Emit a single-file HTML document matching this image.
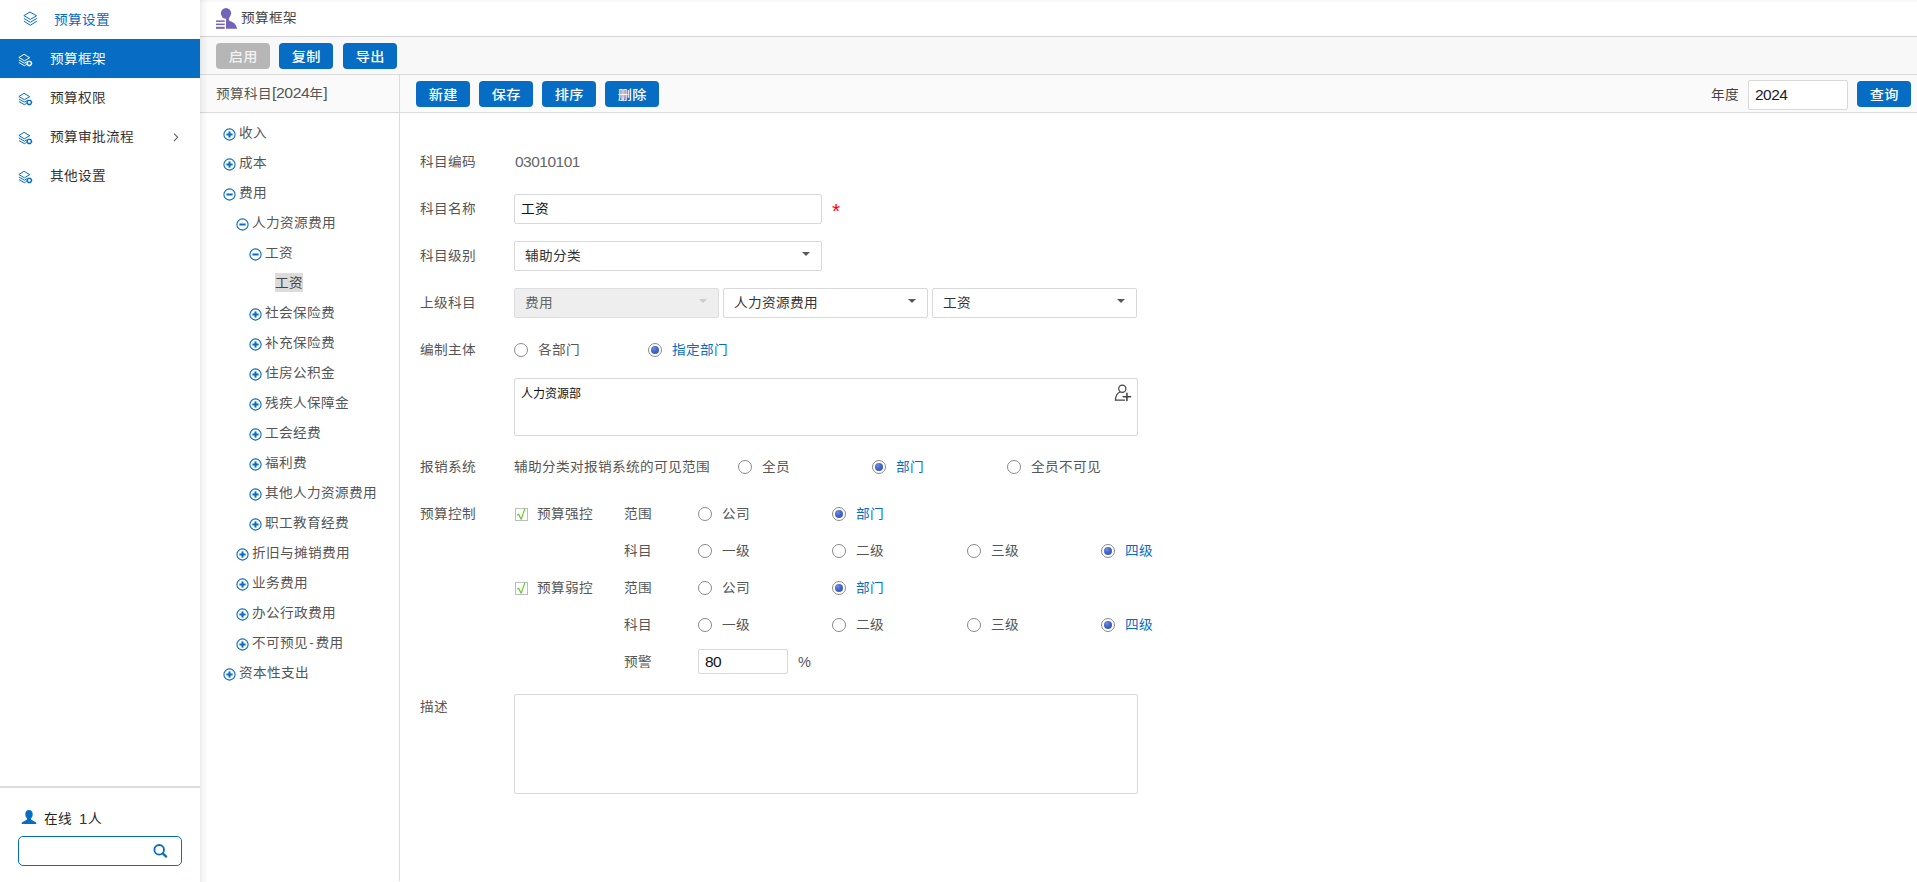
<!DOCTYPE html><html lang="zh-CN"><head><meta charset="utf-8"><title>预算框架</title><style>
*{box-sizing:border-box;margin:0;padding:0}
html,body{width:1917px;height:882px;overflow:hidden;background:#fff}
body{font-family:"Liberation Sans","Noto Sans CJK SC",sans-serif;font-size:14px;color:#555;position:relative}
.a{position:absolute;white-space:nowrap}
.t{position:absolute;white-space:nowrap;height:20px;line-height:20px;font-size:13px;letter-spacing:.33px;transform:scaleX(1.05);transform-origin:0 50%}
#side{left:0;top:0;width:200px;height:882px;background:#fff}
#main{left:200px;top:0;width:1717px;height:882px;background:#fff}
.btn{position:absolute;width:54px;height:26px;border-radius:4px;background:#066cc4;color:#fff;font-size:14px;line-height:26px;text-align:center;font-weight:500}
.btn span{display:inline-block;font-size:13px;letter-spacing:.33px;margin-right:-.33px;transform:scaleX(1.09)}
.btn.dis{background:#b6b6b6;color:#f1f1f1}
.hl{position:absolute;height:1px;background:#d9d9d9}
.inp{position:absolute;border:1px solid #d9d9d9;border-radius:2px;background:#fff}
.sel{position:absolute;border:1px solid #d9d9d9;border-radius:2px;background:#fff;height:30px}
.sel .t{left:10px;top:4px;color:#333}
.sel .car{position:absolute;right:10.6px;top:10.2px;width:0;height:0;border-left:4.4px solid transparent;border-right:4.4px solid transparent;border-top:4.5px solid #585858}
.sel.dis{background:#eee;border-color:#ddd}
.sel.dis .t{color:#666}
.sel.dis .car{border-top-color:#ccc}
.rad{position:absolute;width:14px;height:14px;border-radius:50%;border:1px solid #8a8a8a;background:#fff}
.rad.on::after{content:"";position:absolute;left:2px;top:2px;width:8px;height:8px;border-radius:50%;background:radial-gradient(circle at 35% 30%,#6f8edd 0%,#4265c8 45%,#3051b4 100%)}
.chk{position:absolute;width:13px;height:13px;border:1px solid #bdbdbd;background:#fff;color:#4fbf1f;font-size:13px;line-height:11px;text-align:center;font-family:"DejaVu Sans","Liberation Sans",sans-serif}
.blue{color:#066cc4}
.t .n{font-size:15px;letter-spacing:-.4px;line-height:0}
.num{font-size:15.5px;letter-spacing:-.5px;transform:none}
</style></head><body>
<div id="side" class="a">
<svg class="a" style="left:23px;top:11px" width="15" height="16" viewBox="0 0 15 16" fill="none" stroke="#066cc4" stroke-width="1" stroke-linejoin="round" stroke-linecap="round"><path d="M7.35 1.2 L13.5 4.8 L7.35 8.4 L1.2 4.8 Z"/><path d="M1.2 7.6 L7.35 11.3 L13.5 7.6"/><path d="M1.2 10.4 L7.35 14.2 L13.5 10.4"/></svg>
<div class="t blue" style="left:54px;top:10px">预算设置</div>
<div class="a" style="left:0;top:39px;width:200px;height:39px;background:#066cc4"></div>
<svg class="a" style="left:18px;top:52.5px" width="16" height="14" viewBox="0 0 16 14" fill="none" stroke="#fff" stroke-width="1" stroke-linejoin="round" stroke-linecap="round"><path d="M6.4 1.5 L11.7 4.7 L6.4 7.8 L1.2 4.7 Z"/><path d="M1.2 7.2 L6.4 10.2 L8.7 8.9"/><path d="M1.2 9.7 L6.4 12.7 L8.3 11.6"/><path d="M10.12 8.36 L12.48 8.36 L13.65 10.4 L12.48 12.44 L10.12 12.44 L8.95 10.4 Z" stroke-width="1.4"/></svg>
<div class="t" style="left:50px;top:49px;color:#fff">预算框架</div>
<svg class="a" style="left:18px;top:91.5px" width="16" height="14" viewBox="0 0 16 14" fill="none" stroke="#066cc4" stroke-width="1" stroke-linejoin="round" stroke-linecap="round"><path d="M6.4 1.5 L11.7 4.7 L6.4 7.8 L1.2 4.7 Z"/><path d="M1.2 7.2 L6.4 10.2 L8.7 8.9"/><path d="M1.2 9.7 L6.4 12.7 L8.3 11.6"/><path d="M10.12 8.36 L12.48 8.36 L13.65 10.4 L12.48 12.44 L10.12 12.44 L8.95 10.4 Z" stroke-width="1.4"/></svg>
<div class="t" style="left:50px;top:88px;color:#333">预算权限</div>
<svg class="a" style="left:18px;top:130.5px" width="16" height="14" viewBox="0 0 16 14" fill="none" stroke="#066cc4" stroke-width="1" stroke-linejoin="round" stroke-linecap="round"><path d="M6.4 1.5 L11.7 4.7 L6.4 7.8 L1.2 4.7 Z"/><path d="M1.2 7.2 L6.4 10.2 L8.7 8.9"/><path d="M1.2 9.7 L6.4 12.7 L8.3 11.6"/><path d="M10.12 8.36 L12.48 8.36 L13.65 10.4 L12.48 12.44 L10.12 12.44 L8.95 10.4 Z" stroke-width="1.4"/></svg>
<div class="t" style="left:50px;top:127px;color:#333">预算审批流程</div>
<svg class="a" style="left:18px;top:169.5px" width="16" height="14" viewBox="0 0 16 14" fill="none" stroke="#066cc4" stroke-width="1" stroke-linejoin="round" stroke-linecap="round"><path d="M6.4 1.5 L11.7 4.7 L6.4 7.8 L1.2 4.7 Z"/><path d="M1.2 7.2 L6.4 10.2 L8.7 8.9"/><path d="M1.2 9.7 L6.4 12.7 L8.3 11.6"/><path d="M10.12 8.36 L12.48 8.36 L13.65 10.4 L12.48 12.44 L10.12 12.44 L8.95 10.4 Z" stroke-width="1.4"/></svg>
<div class="t" style="left:50px;top:166px;color:#333">其他设置</div>
<svg class="a" style="left:172px;top:131px" width="8" height="12" viewBox="0 0 8 12" fill="none" stroke="#666" stroke-width="1.1"><path d="M2 2.6 L5.7 6.3 L2 10"/></svg>
<div class="a" style="left:0;top:786px;width:200px;height:2px;background:#dcdcdc"></div>
<svg class="a" style="left:21px;top:809px" width="16" height="16" viewBox="0 0 16 16"><path fill="#066cc4" d="M8 1 C5.6 1 4.3 2.9 4.3 5.2 C4.3 7 5 8.5 6 9.3 L6 10 C6 10.6 5.6 10.9 4.8 11.3 L1.6 12.9 C1 13.2 0.7 13.7 0.7 14.3 L0.7 15 L15.3 15 L15.3 14.3 C15.3 13.7 15 13.2 14.4 12.9 L11.2 11.3 C10.4 10.9 10 10.6 10 10 L10 9.3 C11 8.5 11.7 7 11.7 5.2 C11.7 2.9 10.4 1 8 1 Z"/></svg>
<div class="t" style="left:44px;top:809px;color:#222">在线</div>
<div class="t num" style="left:79px;top:809px;color:#333;font-size:15px">1</div>
<div class="t" style="left:88px;top:809px;color:#222">人</div>
<div class="a" style="left:18px;top:836px;width:164px;height:30px;border:1px solid #066cc4;border-radius:5px;background:#fff"></div>
<svg class="a" style="left:152px;top:843px" width="16" height="16" viewBox="0 0 16 16" fill="none" stroke="#066cc4" stroke-width="1.8" stroke-linecap="round"><circle cx="7.2" cy="6.8" r="4.8"/><path d="M11 10.6 L14.2 13.6" stroke-width="2.2"/></svg>
</div>
<div id="main" class="a">
<svg class="a" style="left:16px;top:7px" width="22" height="22" viewBox="0 0 22 22"><g fill="#7363bb"><ellipse cx="10" cy="6.35" rx="5.1" ry="5.35"/><path d="M10 10 L10 21.85 L21.1 21.85 C20.6 18.3 18.6 15.9 15.3 14.5 C13.8 13.9 13 13.4 12.9 12.4 L12.9 10 Z"/><rect x="0" y="13.4" width="8.7" height="1.5"/><rect x="0" y="16.6" width="8.7" height="1.5"/><rect x="0" y="19.8" width="8.7" height="2"/></g></svg>
<div class="t" style="left:41px;top:8px;color:#444">预算框架</div>
<div class="hl" style="left:0;top:36px;width:1717px;background:#d4d4d4"></div>
<div class="a" style="left:0;top:37px;width:1717px;height:37px;background:#f8f8f8"></div>
<div class="btn dis" style="left:16px;top:43px"><span>启用</span></div>
<div class="btn" style="left:79px;top:43px"><span>复制</span></div>
<div class="btn" style="left:143px;top:43px"><span>导出</span></div>
<div class="hl" style="left:0;top:74px;width:1717px;background:#dcdcdc"></div>
<div class="a" style="left:0;top:75px;width:1717px;height:37px;background:#fafafa"></div>
<div class="t" style="left:16px;top:84px;color:#555">预算科目<span class="n">[2024</span>年<span class="n">]</span></div>
<div class="btn" style="left:216px;top:81px"><span>新建</span></div>
<div class="btn" style="left:279px;top:81px"><span>保存</span></div>
<div class="btn" style="left:342px;top:81px"><span>排序</span></div>
<div class="btn" style="left:405px;top:81px"><span>删除</span></div>
<div class="t" style="left:1511px;top:85px;color:#444">年度</div>
<div class="inp" style="left:1548px;top:80px;width:100px;height:30px"><div class="t num" style="left:6px;top:4px;color:#1a1a2a">2024</div></div>
<div class="btn" style="left:1657px;top:81px"><span>查询</span></div>
<div class="hl" style="left:0;top:112px;width:1717px;background:#dcdcdc"></div>
<div class="a" style="left:199px;top:75px;width:1px;height:806px;background:#dcdcdc"></div>
<svg class="a" style="left:22.5px;top:127.5px" width="13" height="13" viewBox="0 0 13 13" fill="none" stroke="#066cc4"><circle cx="6.5" cy="6.5" r="5.6" stroke-width="1.1"/><path d="M3.4 6.5 H9.6" stroke-width="2"/><path d="M6.5 3.4 V9.6" stroke-width="2"/></svg>
<div class="t" style="left:39px;top:123px;color:#555">收入</div>
<svg class="a" style="left:22.5px;top:157.5px" width="13" height="13" viewBox="0 0 13 13" fill="none" stroke="#066cc4"><circle cx="6.5" cy="6.5" r="5.6" stroke-width="1.1"/><path d="M3.4 6.5 H9.6" stroke-width="2"/><path d="M6.5 3.4 V9.6" stroke-width="2"/></svg>
<div class="t" style="left:39px;top:153px;color:#555">成本</div>
<svg class="a" style="left:22.5px;top:187.5px" width="13" height="13" viewBox="0 0 13 13" fill="none" stroke="#066cc4"><circle cx="6.5" cy="6.5" r="5.6" stroke-width="1.1"/><path d="M3.4 6.5 H9.6" stroke-width="2"/></svg>
<div class="t" style="left:39px;top:183px;color:#555">费用</div>
<svg class="a" style="left:35.5px;top:217.5px" width="13" height="13" viewBox="0 0 13 13" fill="none" stroke="#066cc4"><circle cx="6.5" cy="6.5" r="5.6" stroke-width="1.1"/><path d="M3.4 6.5 H9.6" stroke-width="2"/></svg>
<div class="t" style="left:52px;top:213px;color:#555">人力资源费用</div>
<svg class="a" style="left:48.5px;top:247.5px" width="13" height="13" viewBox="0 0 13 13" fill="none" stroke="#066cc4"><circle cx="6.5" cy="6.5" r="5.6" stroke-width="1.1"/><path d="M3.4 6.5 H9.6" stroke-width="2"/></svg>
<div class="t" style="left:65px;top:243px;color:#555">工资</div>
<div class="a" style="left:75px;top:273px;width:28px;height:19px;background:#dcdcdc"></div>
<div class="t" style="left:75px;top:273px;color:#444">工资</div>
<svg class="a" style="left:48.5px;top:307.5px" width="13" height="13" viewBox="0 0 13 13" fill="none" stroke="#066cc4"><circle cx="6.5" cy="6.5" r="5.6" stroke-width="1.1"/><path d="M3.4 6.5 H9.6" stroke-width="2"/><path d="M6.5 3.4 V9.6" stroke-width="2"/></svg>
<div class="t" style="left:65px;top:303px;color:#555">社会保险费</div>
<svg class="a" style="left:48.5px;top:337.5px" width="13" height="13" viewBox="0 0 13 13" fill="none" stroke="#066cc4"><circle cx="6.5" cy="6.5" r="5.6" stroke-width="1.1"/><path d="M3.4 6.5 H9.6" stroke-width="2"/><path d="M6.5 3.4 V9.6" stroke-width="2"/></svg>
<div class="t" style="left:65px;top:333px;color:#555">补充保险费</div>
<svg class="a" style="left:48.5px;top:367.5px" width="13" height="13" viewBox="0 0 13 13" fill="none" stroke="#066cc4"><circle cx="6.5" cy="6.5" r="5.6" stroke-width="1.1"/><path d="M3.4 6.5 H9.6" stroke-width="2"/><path d="M6.5 3.4 V9.6" stroke-width="2"/></svg>
<div class="t" style="left:65px;top:363px;color:#555">住房公积金</div>
<svg class="a" style="left:48.5px;top:397.5px" width="13" height="13" viewBox="0 0 13 13" fill="none" stroke="#066cc4"><circle cx="6.5" cy="6.5" r="5.6" stroke-width="1.1"/><path d="M3.4 6.5 H9.6" stroke-width="2"/><path d="M6.5 3.4 V9.6" stroke-width="2"/></svg>
<div class="t" style="left:65px;top:393px;color:#555">残疾人保障金</div>
<svg class="a" style="left:48.5px;top:427.5px" width="13" height="13" viewBox="0 0 13 13" fill="none" stroke="#066cc4"><circle cx="6.5" cy="6.5" r="5.6" stroke-width="1.1"/><path d="M3.4 6.5 H9.6" stroke-width="2"/><path d="M6.5 3.4 V9.6" stroke-width="2"/></svg>
<div class="t" style="left:65px;top:423px;color:#555">工会经费</div>
<svg class="a" style="left:48.5px;top:457.5px" width="13" height="13" viewBox="0 0 13 13" fill="none" stroke="#066cc4"><circle cx="6.5" cy="6.5" r="5.6" stroke-width="1.1"/><path d="M3.4 6.5 H9.6" stroke-width="2"/><path d="M6.5 3.4 V9.6" stroke-width="2"/></svg>
<div class="t" style="left:65px;top:453px;color:#555">福利费</div>
<svg class="a" style="left:48.5px;top:487.5px" width="13" height="13" viewBox="0 0 13 13" fill="none" stroke="#066cc4"><circle cx="6.5" cy="6.5" r="5.6" stroke-width="1.1"/><path d="M3.4 6.5 H9.6" stroke-width="2"/><path d="M6.5 3.4 V9.6" stroke-width="2"/></svg>
<div class="t" style="left:65px;top:483px;color:#555">其他人力资源费用</div>
<svg class="a" style="left:48.5px;top:517.5px" width="13" height="13" viewBox="0 0 13 13" fill="none" stroke="#066cc4"><circle cx="6.5" cy="6.5" r="5.6" stroke-width="1.1"/><path d="M3.4 6.5 H9.6" stroke-width="2"/><path d="M6.5 3.4 V9.6" stroke-width="2"/></svg>
<div class="t" style="left:65px;top:513px;color:#555">职工教育经费</div>
<svg class="a" style="left:35.5px;top:547.5px" width="13" height="13" viewBox="0 0 13 13" fill="none" stroke="#066cc4"><circle cx="6.5" cy="6.5" r="5.6" stroke-width="1.1"/><path d="M3.4 6.5 H9.6" stroke-width="2"/><path d="M6.5 3.4 V9.6" stroke-width="2"/></svg>
<div class="t" style="left:52px;top:543px;color:#555">折旧与摊销费用</div>
<svg class="a" style="left:35.5px;top:577.5px" width="13" height="13" viewBox="0 0 13 13" fill="none" stroke="#066cc4"><circle cx="6.5" cy="6.5" r="5.6" stroke-width="1.1"/><path d="M3.4 6.5 H9.6" stroke-width="2"/><path d="M6.5 3.4 V9.6" stroke-width="2"/></svg>
<div class="t" style="left:52px;top:573px;color:#555">业务费用</div>
<svg class="a" style="left:35.5px;top:607.5px" width="13" height="13" viewBox="0 0 13 13" fill="none" stroke="#066cc4"><circle cx="6.5" cy="6.5" r="5.6" stroke-width="1.1"/><path d="M3.4 6.5 H9.6" stroke-width="2"/><path d="M6.5 3.4 V9.6" stroke-width="2"/></svg>
<div class="t" style="left:52px;top:603px;color:#555">办公行政费用</div>
<svg class="a" style="left:35.5px;top:637.5px" width="13" height="13" viewBox="0 0 13 13" fill="none" stroke="#066cc4"><circle cx="6.5" cy="6.5" r="5.6" stroke-width="1.1"/><path d="M3.4 6.5 H9.6" stroke-width="2"/><path d="M6.5 3.4 V9.6" stroke-width="2"/></svg>
<div class="t" style="left:52px;top:633px;color:#555">不可预见<span style="margin:0 1.2px">-</span>费用</div>
<svg class="a" style="left:22.5px;top:667.5px" width="13" height="13" viewBox="0 0 13 13" fill="none" stroke="#066cc4"><circle cx="6.5" cy="6.5" r="5.6" stroke-width="1.1"/><path d="M3.4 6.5 H9.6" stroke-width="2"/><path d="M6.5 3.4 V9.6" stroke-width="2"/></svg>
<div class="t" style="left:39px;top:663px;color:#555">资本性支出</div>
<div class="t" style="left:220px;top:152px;color:#555">科目编码</div>
<div class="t num" style="left:315px;top:152px;color:#666">03010101</div>
<div class="t" style="left:220px;top:199px;color:#555">科目名称</div>
<div class="inp" style="left:314px;top:194px;width:308px;height:30px"><div class="t" style="left:6px;top:4px;color:#111">工资</div></div>
<div class="a" style="left:632px;top:199px;color:#f00;font-size:21px;line-height:24px">*</div>
<div class="t" style="left:220px;top:246px;color:#555">科目级别</div>
<div class="sel" style="left:314px;top:241px;width:308px"><div class="t">辅助分类</div><div class="car"></div></div>
<div class="t" style="left:220px;top:293px;color:#555">上级科目</div>
<div class="sel dis" style="left:314px;top:288px;width:205px"><div class="t">费用</div><div class="car"></div></div>
<div class="sel" style="left:523px;top:288px;width:205px"><div class="t">人力资源费用</div><div class="car"></div></div>
<div class="sel" style="left:732px;top:288px;width:205px"><div class="t">工资</div><div class="car"></div></div>
<div class="t" style="left:220px;top:340px;color:#555">编制主体</div>
<div class="rad" style="left:314px;top:343px"></div>
<div class="t" style="left:337.75px;top:340px;color:#555">各部门</div>
<div class="rad on" style="left:448px;top:343px"></div>
<div class="t blue" style="left:471.75px;top:340px;">指定部门</div>
<div class="inp" style="left:314px;top:378px;width:624px;height:58px"><div class="t" style="left:6px;top:5px;color:#111;font-size:12px;letter-spacing:0;transform:none">人力资源部</div>
<svg class="a" style="left:598px;top:4.4px" width="20" height="20" viewBox="0 0 20 20" fill="none" stroke="#444" stroke-width="1.2" stroke-linecap="round"><circle cx="9.3" cy="5.8" r="3.6"/><path d="M7 9 C4 10.2 2.6 13.4 2.4 17.2 H11.6"/><path d="M10.2 13.8 H17.6 M13.9 10.2 V17.6" stroke-width="1.6"/></svg></div>
<div class="t" style="left:220px;top:457px;color:#555">报销系统</div>
<div class="t" style="left:314px;top:457px;color:#555">辅助分类对报销系统的可见范围</div>
<div class="rad" style="left:538px;top:460px"></div>
<div class="t" style="left:561.75px;top:457px;color:#555">全员</div>
<div class="rad on" style="left:672px;top:460px"></div>
<div class="t blue" style="left:695.75px;top:457px;">部门</div>
<div class="rad" style="left:807px;top:460px"></div>
<div class="t" style="left:830.75px;top:457px;color:#555">全员不可见</div>
<div class="t" style="left:220px;top:504px;color:#555">预算控制</div>
<div class="chk" style="left:315px;top:508px"><svg width="13" height="13" viewBox="0 0 13 13" style="position:absolute;left:-1px;top:-1px" fill="none" stroke="#5fcb22" stroke-width="1.1" stroke-linejoin="round" stroke-linecap="round"><path d="M2.5 6.9 L3.7 6.2 L6.1 11.3 L9.8 1"/></svg></div>
<div class="t" style="left:337px;top:504px;color:#555">预算强控</div>
<div class="t" style="left:424px;top:504px;color:#555">范围</div>
<div class="rad" style="left:498px;top:507px"></div>
<div class="t" style="left:521.75px;top:504px;color:#555">公司</div>
<div class="rad on" style="left:632px;top:507px"></div>
<div class="t blue" style="left:655.75px;top:504px;">部门</div>
<div class="t" style="left:424px;top:541px;color:#555">科目</div>
<div class="rad" style="left:498px;top:544px"></div>
<div class="t" style="left:521.75px;top:541px;color:#555">一级</div>
<div class="rad" style="left:632px;top:544px"></div>
<div class="t" style="left:655.75px;top:541px;color:#555">二级</div>
<div class="rad" style="left:767px;top:544px"></div>
<div class="t" style="left:790.75px;top:541px;color:#555">三级</div>
<div class="rad on" style="left:901px;top:544px"></div>
<div class="t blue" style="left:924.75px;top:541px;">四级</div>
<div class="chk" style="left:315px;top:582px"><svg width="13" height="13" viewBox="0 0 13 13" style="position:absolute;left:-1px;top:-1px" fill="none" stroke="#5fcb22" stroke-width="1.1" stroke-linejoin="round" stroke-linecap="round"><path d="M2.5 6.9 L3.7 6.2 L6.1 11.3 L9.8 1"/></svg></div>
<div class="t" style="left:337px;top:578px;color:#555">预算弱控</div>
<div class="t" style="left:424px;top:578px;color:#555">范围</div>
<div class="rad" style="left:498px;top:581px"></div>
<div class="t" style="left:521.75px;top:578px;color:#555">公司</div>
<div class="rad on" style="left:632px;top:581px"></div>
<div class="t blue" style="left:655.75px;top:578px;">部门</div>
<div class="t" style="left:424px;top:615px;color:#555">科目</div>
<div class="rad" style="left:498px;top:618px"></div>
<div class="t" style="left:521.75px;top:615px;color:#555">一级</div>
<div class="rad" style="left:632px;top:618px"></div>
<div class="t" style="left:655.75px;top:615px;color:#555">二级</div>
<div class="rad" style="left:767px;top:618px"></div>
<div class="t" style="left:790.75px;top:615px;color:#555">三级</div>
<div class="rad on" style="left:901px;top:618px"></div>
<div class="t blue" style="left:924.75px;top:615px;">四级</div>
<div class="t" style="left:424px;top:652px;color:#555">预警</div>
<div class="inp" style="left:498px;top:649px;width:90px;height:25px"><div class="t num" style="left:6px;top:2px;color:#111">80</div></div>
<div class="t" style="left:598px;top:652px;color:#555;font-size:14.5px;transform:none">%</div>
<div class="t" style="left:220px;top:697px;color:#555">描述</div>
<div class="inp" style="left:314px;top:694px;width:624px;height:100px"></div>
<div class="a" style="left:0;top:0;width:8px;height:882px;background:linear-gradient(to right,rgba(0,0,25,.078) 0,rgba(0,0,20,.055) 1.5px,rgba(0,0,10,.035) 3px,rgba(0,0,0,.022) 5px,rgba(0,0,0,0) 8px)"></div>
<div class="a" style="left:0;top:0;width:1717px;height:3px;background:linear-gradient(to bottom,rgba(0,0,0,.04),rgba(0,0,0,.02) 1.5px,rgba(0,0,0,0) 3px)"></div>
</div>
</body></html>
